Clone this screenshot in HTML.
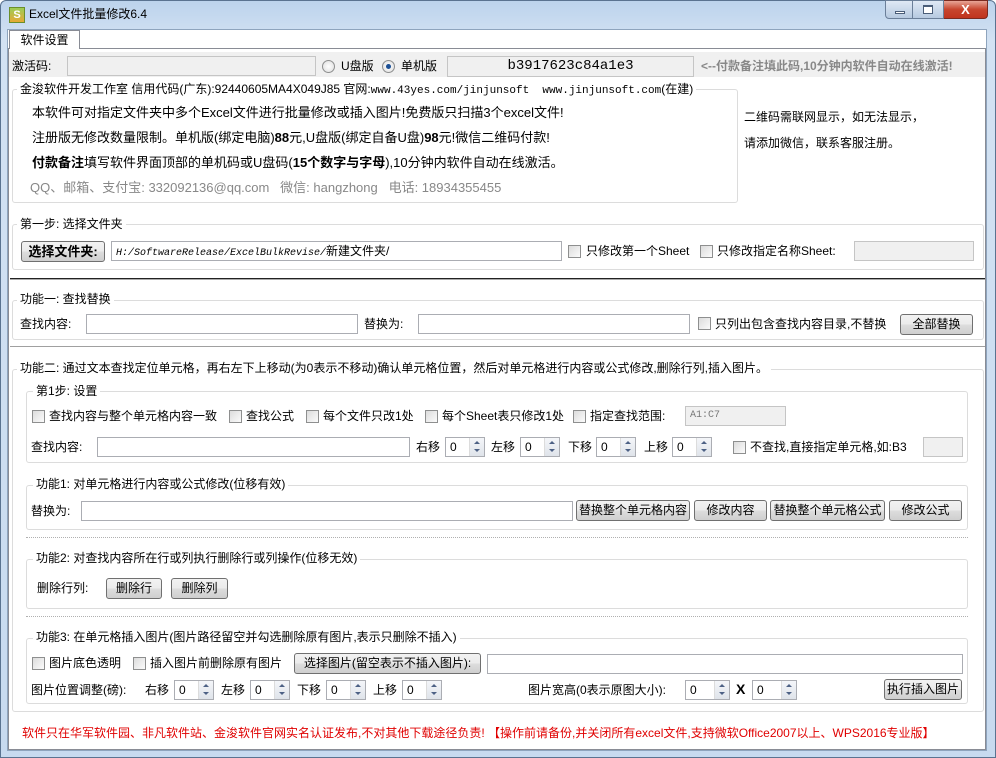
<!DOCTYPE html>
<html><head><meta charset="utf-8">
<style>
*{margin:0;padding:0;box-sizing:border-box}
body{width:996px;height:758px;overflow:hidden;background:#fff;font-family:"Liberation Sans","Noto Sans CJK SC",sans-serif;font-size:12px;color:#000;position:relative}
.a{position:absolute;white-space:nowrap;line-height:14px}
.frame{position:absolute;left:0;top:0;width:996px;height:758px;background:linear-gradient(180deg,#bcd3ec 0,#d3e2f3 40px,#c7daef 100%);border:1px solid #5a7390;border-radius:6px 6px 0 0}
.client{position:absolute;left:7px;top:29px;width:980px;height:722px;background:#fff;border:1px solid #8ea4bd}
.tabhdr{position:absolute;left:9px;top:30px;width:71px;height:19px;background:#fff;border:1px solid #898c95;border-bottom:none;font-size:12px;text-align:center;line-height:18px}
.page{position:absolute;left:8px;top:48px;width:978px;height:702px;border:1px solid #898c95;background:#fff}
.gb{position:absolute;border:1px solid #dcdcdc;border-radius:3px}
.lg{position:absolute;background:#fff;padding:0 3px;white-space:nowrap;line-height:14px}
.in{position:absolute;border:1px solid #abadb3;background:#fff;height:20px}
.gin{position:absolute;border:1px solid #c5c5c5;background:#f0f0f0;height:20px}
.btn{position:absolute;height:21px;border:1px solid #707070;border-radius:3px;background:linear-gradient(#f2f2f2,#ebebeb 50%,#dddddd 51%,#cfcfcf);text-align:center;line-height:19px;white-space:nowrap}
.cb{position:absolute;width:13px;height:13px;border:1px solid #8e8f8f;background:linear-gradient(135deg,#dcdcdc,#fbfbfb)}
.sp{position:absolute;height:20px;border:1px solid #abadb3;background:#fff;padding-left:4px;line-height:18px}
.sp i{position:absolute;right:0;top:0;width:15px;height:18px;border-left:1px solid #dcdcdc;background:linear-gradient(#f4f6f9,#dfe4ea)}
.sp i:before{content:"";position:absolute;left:4px;top:3px;border:3px solid transparent;border-bottom:3px solid #4d6185;border-top:0}
.sp i:after{content:"";position:absolute;left:4px;top:11px;border:3px solid transparent;border-top:3px solid #4d6185;border-bottom:0}
.rd{position:absolute;width:13px;height:13px;border-radius:50%;border:1px solid #8e8f8f;background:radial-gradient(#fff,#dcdcdc)}
.dot{position:absolute;border-top:1px dotted #b0b0b0}
.big{font-size:13px;line-height:15px}
</style></head><body>
<div class="frame"></div>
<div class="a" style="left:9px;top:7px;width:16px;height:16px;background:linear-gradient(#9ccc55,#e6a935);border:1px solid #6b8f2a;color:#fff;font-size:11px;font-weight:bold;text-align:center;line-height:14px">S</div>
<div class="a" style="left:29px;top:7px;font-size:12px">Excel文件批量修改6.4</div>
<div class="a" style="left:885px;top:0;width:28px;height:19px;border:1px solid #6b7f99;border-radius:0 0 0 4px;background:linear-gradient(#dfe9f5,#b6c9e0)"><div style="position:absolute;left:9px;top:10px;width:10px;height:3px;background:#fff;border:1px solid #4a5d78"></div></div>
<div class="a" style="left:913px;top:0;width:31px;height:19px;border:1px solid #6b7f99;border-left:none;background:linear-gradient(#dfe9f5,#b6c9e0)"><div style="position:absolute;left:10px;top:4px;width:10px;height:9px;border:1px solid #4a5d78;border-top-width:2px;background:#fff"></div></div>
<div class="a" style="left:944px;top:0;width:44px;height:19px;border:1px solid #7a2a20;border-left:none;border-radius:0 0 4px 0;background:linear-gradient(#e8a597,#c7452e 50%,#c0341e);color:#fff;font-weight:bold;font-size:13px;text-align:center;line-height:17px">X</div>
<div class="client"></div>
<div class="page"></div>
<div class="tabhdr">软件设置</div>

<div class="a" style="left:9px;top:52px;width:976px;height:25px;background:#f0f0f0"></div>
<div class="a" style="left:12px;top:59px;">激活码:</div>
<div class="gin" style="left:67px;top:56px;width:249px"></div>
<div class="rd" style="left:322px;top:60px"></div>
<div class="a" style="left:341px;top:59px">U盘版</div>
<div class="rd" style="left:382px;top:60px"><div style="position:absolute;left:3px;top:3px;width:5px;height:5px;border-radius:50%;background:#1b4f95"></div></div>
<div class="a" style="left:401px;top:59px">单机版</div>
<div class="gin" style="left:447px;top:56px;width:247px;height:21px;text-align:center;font-family:'Liberation Mono',monospace;font-size:14px;line-height:19px">b3917623c84a1e3</div>
<div class="a" style="left:701px;top:59px;color:#888;font-weight:bold">&lt;--付款备注填此码,10分钟内软件自动在线激活!</div>

<div class="gb" style="left:12px;top:89px;width:726px;height:114px"></div>
<div class="lg" style="left:17px;top:82px">金浚软件开发工作室 信用代码(广东):92440605MA4X049J85 官网:<span style="font-family:'Liberation Mono',monospace;font-size:11px">www.43yes.com/jinjunsoft&nbsp; www.jinjunsoft.com</span>(在建)</div>
<div class="a big" style="left:32px;top:105px">本软件可对指定文件夹中多个Excel文件进行批量修改或插入图片!免费版只扫描3个excel文件!</div>
<div class="a big" style="left:32px;top:130px">注册版无修改数量限制。单机版(绑定电脑)<b>88</b>元,U盘版(绑定自备U盘)<b>98</b>元!微信二维码付款!</div>
<div class="a big" style="left:32px;top:155px"><b>付款备注</b>填写软件界面顶部的单机码或U盘码(<b>15个数字与字母</b>),10分钟内软件自动在线激活。</div>
<div class="a big" style="left:30px;top:180px;color:#888">QQ、邮箱、支付宝: 332092136@qq.com &nbsp; 微信: hangzhong &nbsp; 电话: 18934355455</div>
<div class="a" style="left:744px;top:110px">二维码需联网显示，如无法显示，</div>
<div class="a" style="left:744px;top:136px">请添加微信，联系客服注册。</div>

<div class="gb" style="left:12px;top:224px;width:972px;height:46px"></div>
<div class="lg" style="left:17px;top:217px">第一步: 选择文件夹</div>
<div class="btn" style="left:21px;top:241px;width:84px;font-weight:bold;font-size:13px">选择文件夹:</div>
<div class="in" style="left:111px;top:241px;width:451px;padding-left:4px;line-height:18px;font-family:'Liberation Mono',monospace;font-style:italic;font-size:10px">H:/SoftwareRelease/ExcelBulkRevise/<span style="font-style:normal;font-family:'Liberation Sans','Noto Sans CJK SC',sans-serif;font-size:12px">新建文件夹/</span></div>
<div class="cb" style="left:568px;top:245px"></div>
<div class="a" style="left:586px;top:244px">只修改第一个Sheet</div>
<div class="cb" style="left:700px;top:245px"></div>
<div class="a" style="left:717px;top:244px">只修改指定名称Sheet:</div>
<div class="gin" style="left:854px;top:241px;width:120px"></div>
<div class="a" style="left:10px;top:278px;width:975px;height:2px;background:#222;border-bottom:1px solid #aaa"></div>

<div class="gb" style="left:12px;top:300px;width:972px;height:40px"></div>
<div class="lg" style="left:17px;top:292px">功能一: 查找替换</div>
<div class="a" style="left:20px;top:317px">查找内容:</div>
<div class="in" style="left:86px;top:314px;width:272px"></div>
<div class="a" style="left:364px;top:317px">替换为:</div>
<div class="in" style="left:418px;top:314px;width:272px"></div>
<div class="cb" style="left:698px;top:317px"></div>
<div class="a" style="left:715px;top:317px">只列出包含查找内容目录,不替换</div>
<div class="btn" style="left:900px;top:314px;width:73px">全部替换</div>
<div class="a" style="left:10px;top:346px;width:975px;height:1px;background:#a0a0a0"></div>

<div class="gb" style="left:12px;top:369px;width:972px;height:343px"></div>
<div class="lg" style="left:17px;top:361px">功能二: 通过文本查找定位单元格，再右左下上移动(为0表示不移动)确认单元格位置，然后对单元格进行内容或公式修改,删除行列,插入图片。</div>

<div class="gb" style="left:26px;top:391px;width:942px;height:72px"></div>
<div class="lg" style="left:33px;top:384px">第1步: 设置</div>
<div class="cb" style="left:32px;top:410px"></div><div class="a" style="left:49px;top:409px">查找内容与整个单元格内容一致</div>
<div class="cb" style="left:229px;top:410px"></div><div class="a" style="left:246px;top:409px">查找公式</div>
<div class="cb" style="left:306px;top:410px"></div><div class="a" style="left:323px;top:409px">每个文件只改1处</div>
<div class="cb" style="left:425px;top:410px"></div><div class="a" style="left:442px;top:409px">每个Sheet表只修改1处</div>
<div class="cb" style="left:573px;top:410px"></div><div class="a" style="left:590px;top:409px">指定查找范围:</div>
<div class="gin" style="left:685px;top:406px;width:101px;padding-left:4px;line-height:18px;font-size:10px;color:#777;font-family:'Liberation Mono',monospace">A1:C7</div>
<div class="a" style="left:31px;top:440px">查找内容:</div>
<div class="in" style="left:97px;top:437px;width:313px"></div>
<div class="a" style="left:416px;top:440px">右移</div><div class="sp" style="left:445px;top:437px;width:40px">0<i></i></div>
<div class="a" style="left:491px;top:440px">左移</div><div class="sp" style="left:520px;top:437px;width:40px">0<i></i></div>
<div class="a" style="left:568px;top:440px">下移</div><div class="sp" style="left:596px;top:437px;width:40px">0<i></i></div>
<div class="a" style="left:644px;top:440px">上移</div><div class="sp" style="left:672px;top:437px;width:40px">0<i></i></div>
<div class="cb" style="left:733px;top:441px"></div><div class="a" style="left:750px;top:440px">不查找,直接指定单元格,如:B3</div>
<div class="gin" style="left:923px;top:437px;width:40px"></div>

<div class="gb" style="left:26px;top:485px;width:942px;height:45px"></div>
<div class="lg" style="left:33px;top:477px">功能1: 对单元格进行内容或公式修改(位移有效)</div>
<div class="a" style="left:31px;top:504px">替换为:</div>
<div class="in" style="left:81px;top:501px;width:492px"></div>
<div class="btn" style="left:576px;top:500px;width:114px">替换整个单元格内容</div>
<div class="btn" style="left:694px;top:500px;width:73px">修改内容</div>
<div class="btn" style="left:770px;top:500px;width:115px">替换整个单元格公式</div>
<div class="btn" style="left:889px;top:500px;width:73px">修改公式</div>
<div class="dot" style="left:26px;top:537px;width:942px"></div>

<div class="gb" style="left:26px;top:559px;width:942px;height:50px"></div>
<div class="lg" style="left:33px;top:551px">功能2: 对查找内容所在行或列执行删除行或列操作(位移无效)</div>
<div class="a" style="left:37px;top:581px">删除行列:</div>
<div class="btn" style="left:106px;top:578px;width:56px">删除行</div>
<div class="btn" style="left:171px;top:578px;width:57px">删除列</div>
<div class="dot" style="left:26px;top:616px;width:942px"></div>

<div class="gb" style="left:26px;top:638px;width:942px;height:66px"></div>
<div class="lg" style="left:33px;top:630px">功能3: 在单元格插入图片(图片路径留空并勾选删除原有图片,表示只删除不插入)</div>
<div class="cb" style="left:32px;top:657px"></div><div class="a" style="left:49px;top:656px">图片底色透明</div>
<div class="cb" style="left:133px;top:657px"></div><div class="a" style="left:150px;top:656px">插入图片前删除原有图片</div>
<div class="btn" style="left:294px;top:653px;width:187px">选择图片(留空表示不插入图片):</div>
<div class="in" style="left:487px;top:654px;width:476px"></div>
<div class="a" style="left:31px;top:683px">图片位置调整(磅):</div>
<div class="a" style="left:145px;top:683px">右移</div><div class="sp" style="left:174px;top:680px;width:40px">0<i></i></div>
<div class="a" style="left:221px;top:683px">左移</div><div class="sp" style="left:250px;top:680px;width:40px">0<i></i></div>
<div class="a" style="left:297px;top:683px">下移</div><div class="sp" style="left:326px;top:680px;width:40px">0<i></i></div>
<div class="a" style="left:373px;top:683px">上移</div><div class="sp" style="left:402px;top:680px;width:40px">0<i></i></div>
<div class="a" style="left:528px;top:683px">图片宽高(0表示原图大小):</div>
<div class="sp" style="left:685px;top:680px;width:45px">0<i></i></div>
<div class="a" style="left:736px;top:682px;font-weight:bold;font-size:14px">X</div>
<div class="sp" style="left:752px;top:680px;width:45px">0<i></i></div>
<div class="btn" style="left:884px;top:679px;width:78px">执行插入图片</div>

<div class="a" style="left:22px;top:726px;color:#e00000">软件只在华军软件园、非凡软件站、金浚软件官网实名认证发布,不对其他下载途径负责!&nbsp;【操作前请备份,并关闭所有excel文件,支持微软Office2007以上、WPS2016专业版】</div>
</body></html>
